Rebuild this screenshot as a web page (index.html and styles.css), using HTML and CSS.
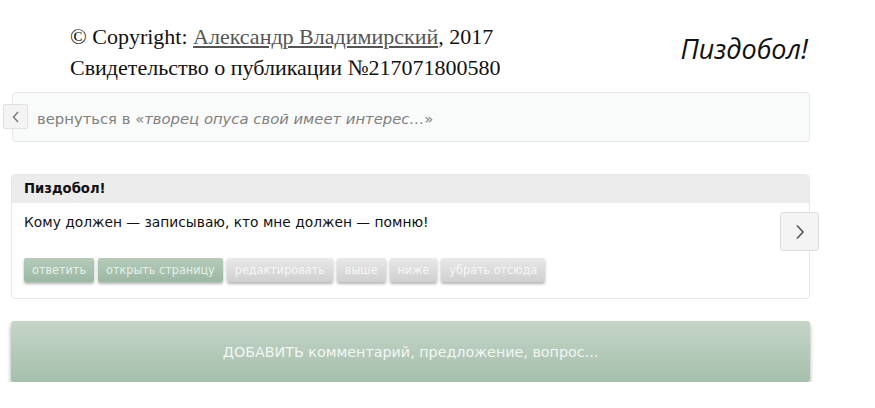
FILE: index.html
```html
<!DOCTYPE html>
<html lang="ru">
<head>
<meta charset="utf-8">
<title>Пиздобол!</title>
<link rel="stylesheet" href="styles.css">
</head>
<body>
<div class="page">

  <div class="head">
    <div class="copyright">
      &copy; Copyright: <a href="#">Александр Владимирский</a>, 2017<br>
      Свидетельство о публикации №217071800580
    </div>
    <div class="title">Пиздобол!</div>
  </div>

  <!-- back link -->
  <div class="back">
    <a class="back_btn" href="#"><svg width="8" height="12" viewBox="0 0 8 12"><path d="M6 1 L1.5 6 L6 11" fill="none" stroke="#777" stroke-width="1.4"/></svg></a>
    <span class="back_text">вернуться в &laquo;<i>творец опуса свой имеет интерес&hellip;</i>&raquo;</span>
  </div>

  <!-- comment -->
  <div class="comment">
    <div class="comment_head">Пиздобол!</div>
    <div class="comment_body">Кому должен &mdash; записываю, кто мне должен &mdash; помню!</div>
    <div class="buttons">
      <span class="btn green">ответить</span>
      <span class="btn green">открыть страницу</span>
      <span class="btn grey">редактировать</span>
      <span class="btn grey">выше</span>
      <span class="btn grey">ниже</span>
      <span class="btn grey">убрать отсюда</span>
    </div>
    <a class="next_btn" href="#"><svg width="10" height="16" viewBox="0 0 10 16"><path d="M2 1.5 L8 8 L2 14.5" fill="none" stroke="#555" stroke-width="1.6"/></svg></a>
  </div>

  <div class="add">ДОБАВИТЬ комментарий, предложение, вопрос...</div>

</div>
</body>
</html>
```

FILE: styles.css
```css
body {
	margin:0px;
	padding:0px;
	background:#fff;
	font-family:"DejaVu Sans", Verdana, sans-serif;
}

.page {
	width:799px;
	margin-left:11px;
	padding-top:21px;
}

/* header */
.head {
	display:flex;
	justify-content:space-between;
	align-items:flex-start;
}

.copyright {
	margin-left:59px;
	font-family:"Liberation Serif", "Times New Roman", serif;
	font-size:22px;
	line-height:31px;
	color:#111;
}

.copyright a {
	color:#555;
	text-decoration:underline;
}

.title {
	margin-top:9px;
	margin-right:2px;
	font-family:"Open Sans", sans-serif;
	font-style:italic;
	font-size:27px;
	color:#111;
}

/* back link */
.back {
	position:relative;
	margin-top:9px;
	margin-left:1px;
	height:48px;
	border:1px solid #e6e6e6;
	border-radius:4px;
	background:#f9fafa;
	display:flex;
	align-items:center;
	padding-left:24px;
}

.back_btn {
	position:absolute;
	left:-10px;
	top:11px;
	width:23px;
	height:23px;
	background:#f3f3f3;
	border:1px solid #e0e0e0;
	border-radius:2px;
	display:flex;
	align-items:center;
	justify-content:center;
}

.back_text {
	font-size:14.8px;
	color:#808080;
	padding-top:3px;
}

/* comment */
.comment {
	position:relative;
	margin-top:32px;
	border:1px solid #e6e6e6;
	border-radius:4px;
	padding-bottom:13px;
}

.comment_head {
	background:#ececec;
	padding:6px 12px 0px 12px;
	height:22px;
	font-size:13.2px;
	font-weight:bold;
	color:#111;
	border-radius:4px 4px 0 0;
}

.comment_body {
	padding:11px 12px 0px 12px;
	height:44px;
	font-size:13.8px;
	color:#111;
}

.buttons {
	display:flex;
	gap:4px;
	padding-left:12px;
	padding-bottom:3px;
}

.btn {
	height:24px;
	line-height:24px;
	padding:0px 8px;
	font-size:12.5px;
	font-stretch:condensed;
	border-radius:2px;
	box-shadow:0px 2px 3px rgba(0,0,0,0.3);
}

.green {
	background:linear-gradient(#b4cbb9, #9bb8a3);
	color:#e6efe8;
}

.grey {
	background:linear-gradient(#e8e8e8, #cfcfcf);
	color:#f6f6f6;
}

.next_btn {
	position:absolute;
	right:-10px;
	top:37px;
	width:37px;
	height:37px;
	background:#f4f4f4;
	border:1px solid #dcdcdc;
	border-radius:3px;
	display:flex;
	align-items:center;
	justify-content:center;
}

/* add button */
.add {
	margin-top:22px;
	height:61px;
	line-height:63px;
	text-align:center;
	border-radius:3px;
	background:linear-gradient(#c4d5c8, #a6bfac);
	box-shadow:0px 3px 4px rgba(0,0,0,0.35);
	font-size:14.3px;
	color:#f2f6f3;
}
```
